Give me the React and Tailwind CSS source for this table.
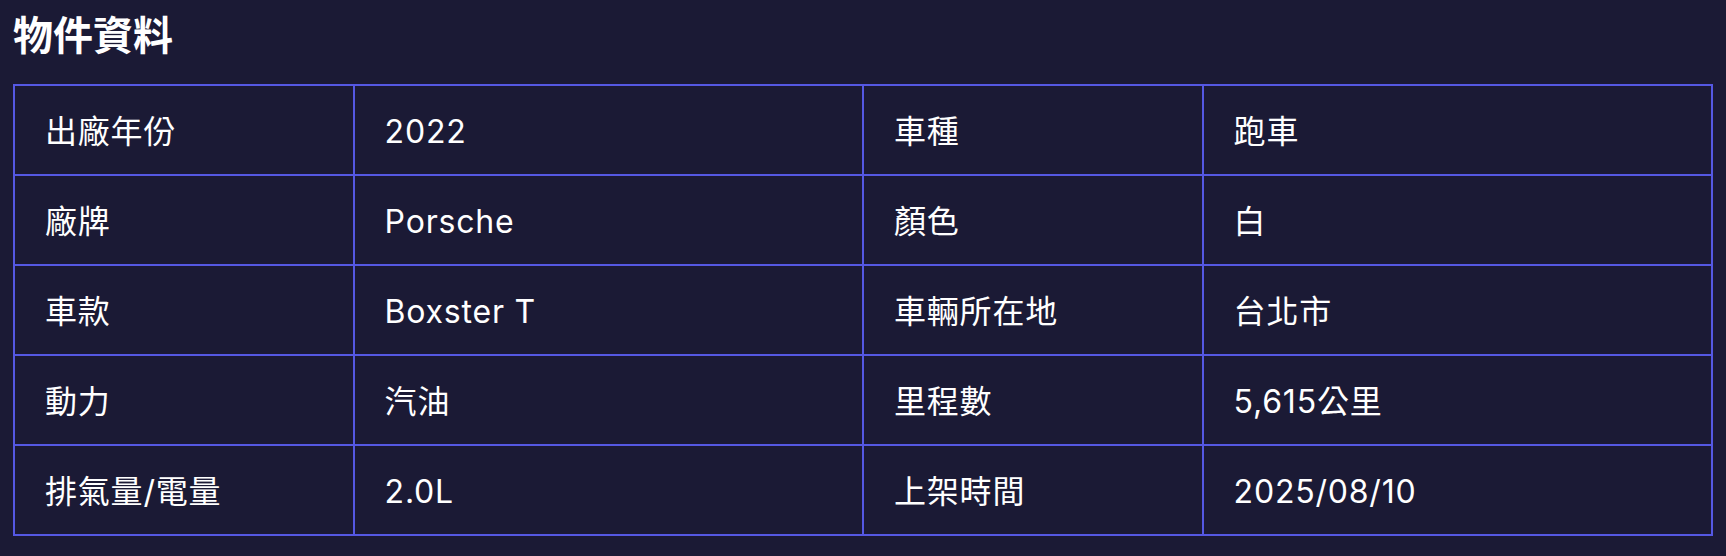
const rows = [
  ['出廠年份', '2022', '車種', '跑車'],
  ['廠牌', 'Porsche', '顏色', '白'],
  ['車款', 'Boxster T', '車輛所在地', '台北市'],
  ['動力', '汽油', '里程數', '5,615公里'],
  ['排氣量/電量', '2.0L', '上架時間', '2025/08/10'],
];

export default function App() {
  return (
    <div
      className="min-h-[556px] bg-[#1b1a35] px-[13px] pt-[12px] text-white"
      style={{ fontFamily: 'Inter, "Noto Sans CJK TC", sans-serif' }}
    >
      <h1 className="mb-[24px] text-[40px] font-bold leading-[48px]">物件資料</h1>

      <table className="w-full table-fixed border-collapse border-2 border-[#5558e3]">
        <colgroup>
          <col className="w-[20%]" />
          <col className="w-[30%]" />
          <col className="w-[20%]" />
          <col className="w-[30%]" />
        </colgroup>
        <tbody>
          {rows.map((row) => (
            <tr key={row[0]} className="h-[90px]">
              {row.map((cell, i) => (
                <td
                  key={i}
                  className="border-2 border-[#5558e3] px-[30px] pt-[4px] align-middle text-[32px] leading-[40px] tracking-[0.025em]"
                >
                  {cell}
                </td>
              ))}
            </tr>
          ))}
        </tbody>
      </table>
    </div>
  );
}
